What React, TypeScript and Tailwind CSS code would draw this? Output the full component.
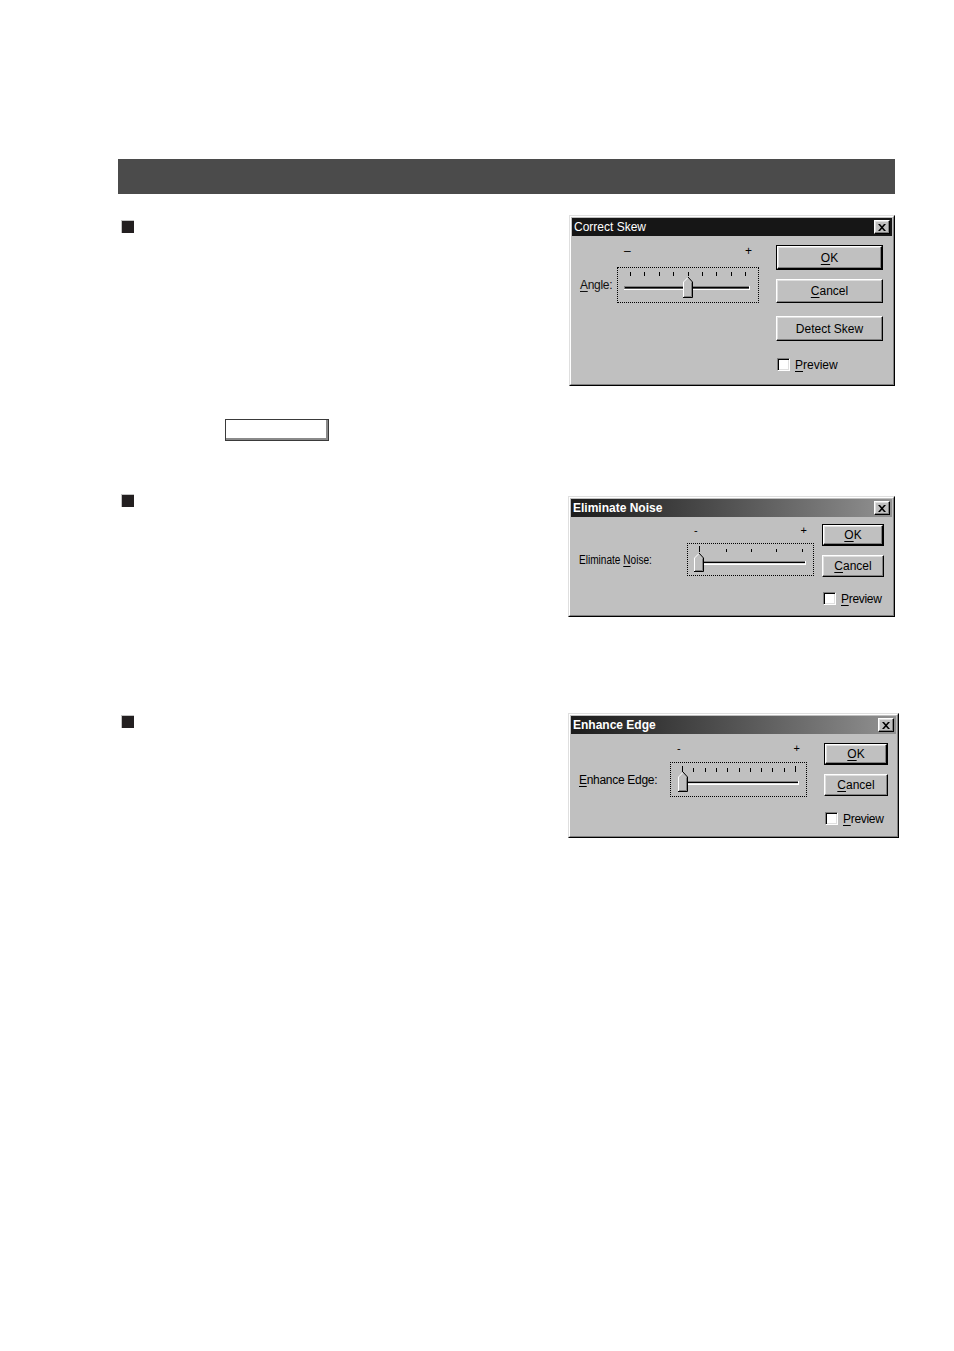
import type { ReactNode } from "react";

const FONT = { fontFamily: '"Liberation Sans", Arial, sans-serif' };

type SliderSpec = {
  w: number;
  h: number;
  ticks: number[];
  tall: number[];
  tickY: [number, number];
  tallY: number;
  trackX: [number, number];
  trackY: number;
  thumb: number;
  tip: number;
  bottom: number;
};

const spread = (a: number, b: number, n: number) =>
  Array.from({ length: n }, (_, i) => Math.round(a + ((b - a) * i) / (n - 1)));

const skewSlider: SliderSpec = {
  w: 140,
  h: 34,
  ticks: spread(12, 127, 9),
  tall: [],
  tickY: [4, 8],
  tallY: 4,
  trackX: [6, 132],
  trackY: 18,
  thumb: 70,
  tip: 9,
  bottom: 30,
};

const noiseSlider: SliderSpec = {
  w: 125,
  h: 31,
  ticks: [11, 38, 63, 88, 114],
  tall: [11],
  tickY: [5, 8],
  tallY: 2,
  trackX: [8, 118],
  trackY: 17,
  thumb: 11,
  tip: 9,
  bottom: 28,
};

const edgeSlider: SliderSpec = {
  w: 135,
  h: 33,
  ticks: spread(11, 124, 11),
  tall: [11, 124],
  tickY: [5, 9],
  tallY: 3,
  trackX: [8, 128],
  trackY: 18,
  thumb: 12,
  tip: 9,
  bottom: 29,
};

function SliderArt({ s, dark }: { s: SliderSpec; dark?: boolean }) {
  const c = s.thumb;
  const hw = 5;
  const sh = s.tip + 5;
  const b = s.bottom;
  const [x1, x2] = s.trackX;
  const y = s.trackY;
  return (
    <svg width={s.w} height={s.h} viewBox={`0 0 ${s.w} ${s.h}`} className="block">
      {s.ticks.map((t) => (
        <rect
          key={t}
          x={t}
          y={s.tall.includes(t) ? s.tallY : s.tickY[0]}
          width={1}
          height={s.tickY[1] - (s.tall.includes(t) ? s.tallY : s.tickY[0])}
          fill="#000"
        />
      ))}
      <rect x={x1} y={y} width={x2 - x1} height={4} fill="#fff" />
      <rect x={x1} y={y} width={x2 - x1 - 1} height={1} fill="#808080" />
      <rect x={x1 + 1} y={y + 1} width={x2 - x1 - 2} height={1} fill="#000" />
      <rect x={x1} y={y} width={1} height={3} fill="#808080" />
      <rect x={x1 + 1} y={y + 2} width={x2 - x1 - 2} height={1} fill={dark ? "#555" : "#dfdfdf"} />
      <polygon
        points={`${c - hw},${b} ${c - hw},${sh} ${c},${s.tip} ${c + hw},${sh} ${c + hw},${b}`}
        fill="#c0c0c0"
      />
      <polyline
        points={`${c - hw + 0.5},${b - 1} ${c - hw + 0.5},${sh} ${c},${s.tip + 0.5}`}
        fill="none"
        stroke="#fff"
        strokeWidth={1}
      />
      <polyline
        points={`${c},${s.tip} ${c + hw - 0.5},${sh} ${c + hw - 0.5},${b - 0.5} ${c - hw},${b - 0.5}`}
        fill="none"
        stroke="#000"
        strokeWidth={1}
      />
      <polyline
        points={`${c + hw - 1.5},${sh + 0.5} ${c + hw - 1.5},${b - 1.5} ${c - hw + 1},${b - 1.5}`}
        fill="none"
        stroke="#808080"
        strokeWidth={1}
      />
    </svg>
  );
}

function Btn({ children, isDefault, className }: { children: ReactNode; isDefault?: boolean; className: string }) {
  return (
    <div className={`${isDefault ? "border border-black" : ""} bg-[#c0c0c0] ${className}`}>
      <div className="flex h-full w-full items-center justify-center border border-t-white border-l-white border-r-black border-b-black text-black shadow-[inset_-1px_-1px_0_#808080,inset_1px_1px_0_#dfdfdf]">
        {children}
      </div>
    </div>
  );
}

function CloseBtn() {
  return (
    <div className="flex h-[14px] w-[16px] items-center justify-center border border-t-white border-l-white border-r-black border-b-black bg-[#c0c0c0] shadow-[inset_-1px_-1px_0_#808080,inset_1px_1px_0_#dfdfdf]">
      <svg width="8" height="7" viewBox="0 0 8 7">
        <path d="M0 0h2l2 2.2L6 0h2L5 3.5 8 7H6L4 4.8 2 7H0l3-3.5z" fill="#000" />
      </svg>
    </div>
  );
}

function Check({ label, className }: { label: ReactNode; className: string }) {
  return (
    <div className={`flex items-center ${className}`}>
      <div className="h-[13px] w-[13px] shrink-0 border border-t-[#808080] border-l-[#808080] border-r-white border-b-white bg-white shadow-[inset_1px_1px_0_#000,inset_-1px_-1px_0_#dfdfdf]" />
      <span className="ml-[5px] leading-none text-black">{label}</span>
    </div>
  );
}

function Dialog({
  title,
  bold,
  gradient,
  className,
  children,
}: {
  title: string;
  bold?: boolean;
  gradient?: boolean;
  className: string;
  children: ReactNode;
}) {
  return (
    <div className={`border border-t-[#dfdfdf] border-l-[#dfdfdf] border-r-black border-b-black ${className}`}>
      <div className="flex h-full flex-col border border-t-white border-l-white border-r-[#808080] border-b-[#808080] bg-[#c0c0c0] p-px">
        <div
          className={`flex h-[18px] shrink-0 items-center justify-between pl-[2px] pr-[2px] ${
            gradient ? "bg-linear-to-r from-[#1c1c1c] to-[#929292]" : "bg-[#161616]"
          }`}
        >
          <span className={`text-[12px] leading-none text-white ${bold ? "font-bold" : ""}`}>{title}</span>
          <CloseBtn />
        </div>
        {children}
      </div>
    </div>
  );
}

const U = ({ children }: { children: ReactNode }) => <span className="underline underline-offset-2">{children}</span>;

function Bullet({ className }: { className: string }) {
  return <div className={`h-[13px] w-[13px] border-t border-l border-[#c4c4c4] bg-[#231f20] ${className}`} />;
}

export default function App() {
  return (
    <div className="h-[1351px] w-[954px] bg-white pl-[118px] pt-[159px]" style={FONT}>
      <div className="h-[35px] w-[777px] bg-[#4b4b4b]" />

      {/* Correct Skew */}
      <div className="mt-[21px] flex items-start">
        <div className="w-[451px] shrink-0">
          <Bullet className="ml-[3px] mt-[5px]" />
        </div>
        <Dialog title="Correct Skew" className="h-[171px] w-[326px]">
          <div className="flex flex-1 items-start justify-between pl-[8px] pr-[9px]">
            <div className="flex items-end pt-[9px]">
              <div className="flex h-[36px] w-[37px] items-center text-[12px] tracking-[-0.3px] text-[#111]">
                <span>
                  <U>A</U>ngle:
                </span>
              </div>
              <div className="flex flex-col">
                <div className="flex h-[12px] justify-between px-[7px] text-[12px] leading-none text-black">
                  <span>–</span>
                  <span>+</span>
                </div>
                <div className="mt-[10px] border border-dotted border-black">
                  <SliderArt s={skewSlider} dark />
                </div>
              </div>
            </div>
            <div className="flex w-[107px] flex-col pt-[9px] text-[12px]">
              <Btn isDefault className="h-[25px]">
                <span>
                  <U>O</U>K
                </span>
              </Btn>
              <Btn className="mt-[9px] h-[24px]">
                <span>
                  <U>C</U>ancel
                </span>
              </Btn>
              <Btn className="mt-[13px] h-[25px]">Detect Skew</Btn>
              <Check
                className="ml-px mt-[17px]"
                label={
                  <span className="text-[12px]">
                    <U>P</U>review
                  </span>
                }
              />
            </div>
          </div>
        </Dialog>
      </div>

      <div className="ml-[107px] mt-[33px] h-[22px] w-[104px] border border-[#3a3a3a] bg-white shadow-[inset_-2px_-2px_0_#8a8a8a]" />

      {/* Eliminate Noise */}
      <div className="mt-[53px] flex items-start">
        <div className="w-[450px] shrink-0">
          <Bullet className="ml-[3px]" />
        </div>
        <Dialog title="Eliminate Noise" bold gradient className="mt-[2px] h-[121px] w-[327px]">
          <div className="flex flex-1 items-start justify-between pl-[8px] pr-[8px]">
            <div className="flex items-end pt-[8px]">
              <div className="flex h-[33px] w-[108px] items-center text-[12px] text-black">
                <span className="inline-block origin-left scale-x-[0.84] whitespace-nowrap">
                  Eliminate <U>N</U>oise:
                </span>
              </div>
              <div className="flex flex-col">
                <div className="flex h-[12px] justify-between px-[7px] text-[11px] leading-none text-black">
                  <span>-</span>
                  <span>+</span>
                </div>
                <div className="mt-[6px] border border-dotted border-black">
                  <SliderArt s={noiseSlider} />
                </div>
              </div>
            </div>
            <div className="flex w-[62px] flex-col pt-[7px] text-[12px]">
              <Btn isDefault className="h-[22px]">
                <span>
                  <U>O</U>K
                </span>
              </Btn>
              <Btn className="mt-[9px] h-[22px]">
                <span>
                  <U>C</U>ancel
                </span>
              </Btn>
              <Check
                className="ml-px mt-[15px]"
                label={
                  <span className="text-[12px] tracking-[-0.3px]">
                    <U>P</U>review
                  </span>
                }
              />
            </div>
          </div>
        </Dialog>
      </div>

      {/* Enhance Edge */}
      <div className="mt-[96px] flex items-start">
        <div className="w-[450px] shrink-0">
          <Bullet className="ml-[3px] mt-[2px]" />
        </div>
        <Dialog title="Enhance Edge" bold gradient className="h-[125px] w-[331px]">
          <div className="flex flex-1 items-start justify-between pl-[8px] pr-[8px]">
            <div className="flex items-end pt-[9px]">
              <div className="flex h-[35px] w-[91px] items-center text-[12px] tracking-[-0.3px] text-black">
                <span>
                  <U>E</U>nhance Edge:
                </span>
              </div>
              <div className="flex flex-col">
                <div className="flex h-[12px] justify-between px-[7px] text-[11px] leading-none text-black">
                  <span>-</span>
                  <span>+</span>
                </div>
                <div className="mt-[7px] border border-dotted border-black">
                  <SliderArt s={edgeSlider} />
                </div>
              </div>
            </div>
            <div className="flex w-[64px] flex-col pt-[9px] text-[12px]">
              <Btn isDefault className="h-[22px]">
                <span>
                  <U>O</U>K
                </span>
              </Btn>
              <Btn className="mt-[9px] h-[22px]">
                <span>
                  <U>C</U>ancel
                </span>
              </Btn>
              <Check
                className="ml-px mt-[16px]"
                label={
                  <span className="text-[12px] tracking-[-0.3px]">
                    <U>P</U>review
                  </span>
                }
              />
            </div>
          </div>
        </Dialog>
      </div>
    </div>
  );
}
